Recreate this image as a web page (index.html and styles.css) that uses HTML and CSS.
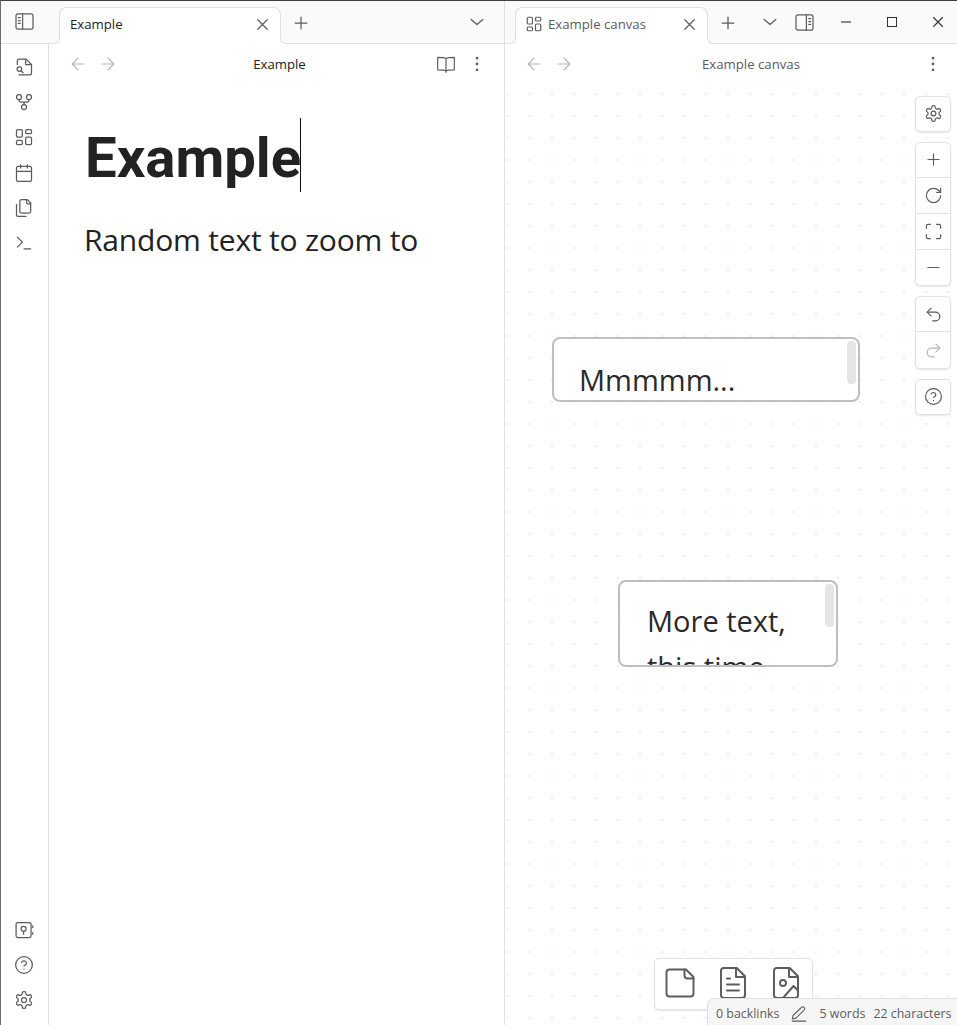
FILE: index.html
```html
<!DOCTYPE html>
<html lang="en">
<head>
<meta charset="utf-8">
<title>Example</title>
<link rel="stylesheet" href="styles.css">
</head>
<body>
<svg class="defs" width="0" height="0" aria-hidden="true">
  <symbol id="i-sidebar-l" viewBox="0 0 20 18"><rect x="1" y="1" width="18" height="16" rx="2"/><path d="M8 1v16M3.500 5h2M3.500 8h2M3.500 11h2"/></symbol>
  <symbol id="i-sidebar-r" viewBox="0 0 20 18"><rect x="1" y="1" width="18" height="16" rx="2"/><path d="M12 1v16M14.500 5h2M14.500 8h2M14.500 11h2"/></symbol>
  <symbol id="i-x" viewBox="0 0 24 24"><path d="M18 6 6 18M6 6l12 12"/></symbol>
  <symbol id="i-plus" viewBox="0 0 24 24"><path d="M12 5v14M5 12h14"/></symbol>
  <symbol id="i-chev" viewBox="0 0 24 24"><path d="m5 9 7 6 7-6"/></symbol>
  <symbol id="i-left" viewBox="0 0 24 24"><path d="M19 12H5M12 19l-7-7 7-7"/></symbol>
  <symbol id="i-right" viewBox="0 0 24 24"><path d="M5 12h14M12 5l7 7-7 7"/></symbol>
  <symbol id="i-book" viewBox="0 0 24 24"><path d="M12 5.500C10.500 4 8 4 2 4v15c6 0 8.500 0 10 1.500 1.500-1.500 4-1.500 10-1.500V4c-6 0-8.500 0-10 1.500ZM12 5.500V22"/></symbol>
  <symbol id="i-more" viewBox="0 0 24 24"><circle cx="12" cy="5" r="1"/><circle cx="12" cy="12" r="1"/><circle cx="12" cy="19" r="1"/></symbol>
  <symbol id="i-file-search" viewBox="0 0 24 24"><path d="M4 9V4.500A2 2 0 0 1 6 2.500h8.500L21 9v10.500a2 2 0 0 1-2 2H6"/><path d="M14 3v6h7"/><circle cx="6.500" cy="14.500" r="2.800"/><path d="m8.800 16.800 2.200 2.200"/></symbol>
  <symbol id="i-graph" viewBox="0 0 24 24"><circle cx="12" cy="18" r="3"/><circle cx="6" cy="6" r="3"/><circle cx="18" cy="6" r="3"/><path d="M18 9v1a2 2 0 0 1-2 2H8a2 2 0 0 1-2-2V9M12 12v3"/></symbol>
  <symbol id="i-canvas" viewBox="0 0 24 24"><rect x="3" y="3" width="7" height="9" rx="1.500"/><rect x="14" y="3" width="7" height="5" rx="1.500"/><rect x="14" y="12" width="7" height="9" rx="1.500"/><rect x="3" y="16" width="7" height="5" rx="1.500"/></symbol>
  <symbol id="i-cal" viewBox="0 0 24 24"><rect x="3" y="4" width="18" height="18" rx="2"/><path d="M16 2v4M8 2v4M3 10h18"/></symbol>
  <symbol id="i-files" viewBox="0 0 24 24"><path d="M20 7h-3a2 2 0 0 1-2-2V2"/><path d="M9 18a2 2 0 0 1-2-2V4a2 2 0 0 1 2-2h7l4 4v10a2 2 0 0 1-2 2Z"/><path d="M3 7.600v12.800A1.600 1.600 0 0 0 4.600 22h9.800"/></symbol>
  <symbol id="i-term" viewBox="0 0 24 24"><path d="m4 17 6-6-6-6M12 19h8"/></symbol>
  <symbol id="i-vault" viewBox="0 0 24 24"><rect x="2.500" y="3" width="18" height="18" rx="2"/><circle cx="11.500" cy="10.500" r="3"/><path d="M11.500 13.500V17M22.500 7v2M22.500 15v2"/></symbol>
  <symbol id="i-help" viewBox="0 0 24 24"><circle cx="12" cy="12" r="10"/><path d="M9.090 9a3 3 0 0 1 5.830 1c0 2-3 3-3 3M12 17h.01"/></symbol>
  <symbol id="i-gear" viewBox="0 0 24 24"><path d="M12.220 2h-.44a2 2 0 0 0-2 2v.18a2 2 0 0 1-1 1.730l-.43.25a2 2 0 0 1-2 0l-.15-.08a2 2 0 0 0-2.730.730l-.22.380a2 2 0 0 0 .73 2.730l.15.1a2 2 0 0 1 1 1.720v.51a2 2 0 0 1-1 1.740l-.15.09a2 2 0 0 0-.73 2.730l.22.380a2 2 0 0 0 2.730.730l.15-.08a2 2 0 0 1 2 0l.43.25a2 2 0 0 1 1 1.730V20a2 2 0 0 0 2 2h.44a2 2 0 0 0 2-2v-.18a2 2 0 0 1 1-1.730l.43-.25a2 2 0 0 1 2 0l.15.08a2 2 0 0 0 2.730-.73l.22-.39a2 2 0 0 0-.73-2.730l-.15-.08a2 2 0 0 1-1-1.740v-.5a2 2 0 0 1 1-1.740l.15-.09a2 2 0 0 0 .73-2.730l-.22-.38a2 2 0 0 0-2.730-.73l-.15.08a2 2 0 0 1-2 0l-.43-.25a2 2 0 0 1-1-1.730V4a2 2 0 0 0-2-2z"/><circle cx="12" cy="12" r="3"/></symbol>
  <symbol id="i-rotate" viewBox="0 0 24 24"><path d="M21 12a9 9 0 1 1-9-9c2.520 0 4.930 1 6.740 2.740L21 8"/><path d="M21 3v5h-5"/></symbol>
  <symbol id="i-fit" viewBox="0 0 24 24"><path d="M8 3H5a2 2 0 0 0-2 2v3M21 8V5a2 2 0 0 0-2-2h-3M3 16v3a2 2 0 0 0 2 2h3M16 21h3a2 2 0 0 0 2-2v-3"/></symbol>
  <symbol id="i-minus" viewBox="0 0 24 24"><path d="M5 12h14"/></symbol>
  <symbol id="i-undo" viewBox="0 0 24 24"><path d="M9 14 4 9l5-5"/><path d="M4 9h10.500a5.500 5.500 0 0 1 0 11H11"/></symbol>
  <symbol id="i-redo" viewBox="0 0 24 24"><path d="m15 14 5-5-5-5"/><path d="M20 9H9.500a5.500 5.500 0 0 0 0 11H13"/></symbol>
  <symbol id="i-note" viewBox="0 0 24 24"><path d="M16 3H5a2 2 0 0 0-2 2v14a2 2 0 0 0 2 2h14a2 2 0 0 0 2-2V8Z"/><path d="M15 3v4a2 2 0 0 0 2 2h4"/></symbol>
  <symbol id="i-file-text" viewBox="0 0 24 24"><path d="M14.500 2H6a2 2 0 0 0-2 2v16a2 2 0 0 0 2 2h12a2 2 0 0 0 2-2V7.500Z"/><path d="M14 2v6h6M16 13H8M16 17H8M10 9H8"/></symbol>
  <symbol id="i-file-image" viewBox="0 0 24 24"><path d="M14.500 2H6a2 2 0 0 0-2 2v16a2 2 0 0 0 2 2h12a2 2 0 0 0 2-2V7.500Z"/><path d="M14 2v6h6"/><circle cx="10" cy="12" r="2"/><path d="m20 17-3-3-7 8"/></symbol>
  <symbol id="i-pencil" viewBox="0 0 24 24"><path d="M3 18.500 4 14 15.500 3a2.500 2.500 0 0 1 3.500 3.500L8 17.500Z"/><path d="M3 21.500h18"/></symbol>
</svg>

<div class="window">
  <header class="titlebar">
    <div class="rail-head"><svg class="ico ico-panel"><use href="#i-sidebar-l"/></svg></div>
    <div class="strip strip-left">
      <div class="tab tab-left">
        <span class="tab-title">Example</span>
        <svg class="ico ico-close"><use href="#i-x"/></svg>
      </div>
      <svg class="ico ico-add"><use href="#i-plus"/></svg>
      <svg class="ico ico-chev chev-left"><use href="#i-chev"/></svg>
    </div>
    <div class="strip strip-right">
      <div class="tab tab-right">
        <svg class="ico ico-tabicon"><use href="#i-canvas"/></svg>
        <span class="tab-title tab-title-dim">Example canvas</span>
        <svg class="ico ico-close"><use href="#i-x"/></svg>
      </div>
      <svg class="ico ico-add"><use href="#i-plus"/></svg>
      <svg class="ico ico-chev chev-right"><use href="#i-chev"/></svg>
      <svg class="ico ico-panel panel-right"><use href="#i-sidebar-r"/></svg>
      <div class="winctl">
        <span class="wbtn"><span class="w-min"></span></span>
        <span class="wbtn"><span class="w-max"></span></span>
        <span class="wbtn"><svg class="ico w-close"><use href="#i-x"/></svg></span>
      </div>
    </div>
  </header>

  <div class="main">
    <nav class="ribbon">
      <div class="ribbon-group">
        <svg class="ico ico-rib"><use href="#i-file-search"/></svg>
        <svg class="ico ico-rib"><use href="#i-graph"/></svg>
        <svg class="ico ico-rib"><use href="#i-canvas"/></svg>
        <svg class="ico ico-rib"><use href="#i-cal"/></svg>
        <svg class="ico ico-rib"><use href="#i-files"/></svg>
        <svg class="ico ico-rib"><use href="#i-term"/></svg>
      </div>
      <div class="ribbon-group">
        <svg class="ico ico-rib"><use href="#i-vault"/></svg>
        <svg class="ico ico-rib"><use href="#i-help"/></svg>
        <svg class="ico ico-rib"><use href="#i-gear"/></svg>
      </div>
    </nav>

    <section class="pane pane-left">
      <div class="viewhead">
        <div class="nav">
          <svg class="ico ico-nav"><use href="#i-left"/></svg>
          <svg class="ico ico-nav"><use href="#i-right"/></svg>
        </div>
        <div class="viewtitle">Example</div>
        <div class="actions">
          <svg class="ico ico-act"><use href="#i-book"/></svg>
          <svg class="ico ico-act"><use href="#i-more"/></svg>
        </div>
      </div>
      <article class="doc">
        <h1 class="doc-title">Example<span class="caret"></span></h1>
        <p class="doc-text">Random text to zoom to</p>
      </article>
    </section>

    <section class="pane pane-right">
      <div class="viewhead viewhead-right">
        <div class="nav">
          <svg class="ico ico-nav"><use href="#i-left"/></svg>
          <svg class="ico ico-nav"><use href="#i-right"/></svg>
        </div>
        <div class="viewtitle viewtitle-dim">Example canvas</div>
        <div class="actions">
          <svg class="ico ico-act"><use href="#i-more"/></svg>
        </div>
      </div>
      <div class="canvas">
        <div class="node node-a">
          <div class="node-text">Mmmmm...</div>
          <span class="thumb thumb-a"></span>
        </div>
        <div class="node node-b">
          <div class="node-text">More text,<br>this time</div>
          <span class="thumb thumb-b"></span>
        </div>

        <div class="controls">
          <div class="ctl-group"><span class="ctl"><svg class="ico ico-ctl"><use href="#i-gear"/></svg></span></div>
          <div class="ctl-group">
            <span class="ctl"><svg class="ico ico-ctl"><use href="#i-plus"/></svg></span>
            <span class="ctl"><svg class="ico ico-ctl"><use href="#i-rotate"/></svg></span>
            <span class="ctl"><svg class="ico ico-ctl"><use href="#i-fit"/></svg></span>
            <span class="ctl"><svg class="ico ico-ctl"><use href="#i-minus"/></svg></span>
          </div>
          <div class="ctl-group">
            <span class="ctl"><svg class="ico ico-ctl"><use href="#i-undo"/></svg></span>
            <span class="ctl"><svg class="ico ico-ctl ico-off"><use href="#i-redo"/></svg></span>
          </div>
          <div class="ctl-group"><span class="ctl"><svg class="ico ico-ctl"><use href="#i-help"/></svg></span></div>
        </div>

        <div class="cardmenu">
          <svg class="ico ico-card"><use href="#i-note"/></svg>
          <svg class="ico ico-card"><use href="#i-file-text"/></svg>
          <svg class="ico ico-card"><use href="#i-file-image"/></svg>
        </div>
      </div>
    </section>
  </div>

  <footer class="status">
    <span>0 backlinks</span>
    <svg class="ico ico-pen"><use href="#i-pencil"/></svg>
    <span class="status-words">5 words</span>
    <span>22 characters</span>
  </footer>
</div>
</body>
</html>
```

FILE: styles.css
```css
* { box-sizing: border-box; }
html, body { margin: 0; height: 100%; background: #fff; overflow: hidden; }
body { font-family: "Open Sans", "Noto Sans", sans-serif; color: #222; }
.defs { position: absolute; }

.ico { display: block; fill: none; stroke: #5c5c5c; stroke-width: 1.75; stroke-linecap: round; stroke-linejoin: round; flex: none; overflow: visible; }

.window { position: relative; width: 957px; height: 1025px; border-top: 1px solid #3f3f3f; border-left: 1px solid #6e6e6e; display: flex; flex-direction: column; overflow: hidden; }

/* title bar */
.titlebar { display: flex; height: 43px; flex: none; background: #fafafa; }
.rail-head { width: 48px; flex: none; display: flex; align-items: center; justify-content: center; padding: 0 1px 1px 0; border-bottom: 1px solid #e0e0e0; }
.ico-panel { width: 19px; height: 17px; stroke-width: 1.3; }
.strip { display: flex; align-items: flex-end; height: 43px; border-bottom: 1px solid #e0e0e0; }
.strip-left { width: 456px; flex: none; padding-left: 10px; border-right: 1px solid #e0e0e0; }
.strip-right { flex: 1; min-width: 0; padding-left: 10px; }

.tab { position: relative; height: 37px; margin-bottom: -1px; background: #fff; border: 1px solid #e0e0e0; border-bottom: 0; border-radius: 8px 8px 0 0; display: flex; align-items: center; padding: 0 8px 4px 10px; flex: none; }
.tab::before, .tab::after { content: ""; position: absolute; bottom: 0; width: 6px; height: 6px; background: #fafafa; border: 0 solid #e0e0e0; border-bottom-width: 1px; }
.tab::before { left: -7px; border-right-width: 1px; border-bottom-right-radius: 6px; box-shadow: 3px 3px 0 #fff; }
.tab::after { right: -7px; border-left-width: 1px; border-bottom-left-radius: 6px; box-shadow: -3px 3px 0 #fff; }
.tab-left { width: 222px; }
.tab-right { width: 193px; padding-left: 9px; }
.tab-title { flex: 1; font-size: 13.200px; color: #222; white-space: nowrap; }
.tab-title-dim { color: #5c5c5c; }
.ico-close { width: 19px; height: 19px; stroke-width: 1.5; }
.ico-tabicon { width: 18px; height: 18px; margin-right: 5px; stroke-width: 1.6; }
.ico-add { width: 20px; height: 20px; margin: 0 0 10px 10px; stroke-width: 1.5; }
.ico-chev { width: 20px; height: 20px; stroke-width: 1.5; margin-bottom: 11px; }
.chev-left { margin-left: 156px; }
.chev-right { margin-left: 22px; }
.panel-right { margin: 0 0 12px 15px; stroke-width: 1.3; }
.winctl { display: flex; align-items: center; margin-left: 8.500px; height: 42px; padding-bottom: 1px; }
.wbtn { width: 46.300px; display: flex; justify-content: center; align-items: center; }
.w-min { width: 10px; height: 2px; background: #8a8a8a; }
.w-max { width: 10px; height: 10px; border: 1px solid #333; }
.w-close { width: 18px; height: 18px; stroke: #333; stroke-width: 1.5; }

/* body */
.main { flex: 1; display: flex; min-height: 0; }
.ribbon { width: 48px; flex: none; border-right: 1px solid #e0e0e0; display: flex; flex-direction: column; justify-content: space-between; align-items: center; padding: 13px 1px 15px 0; background: #fff; }
.ribbon-group { display: flex; flex-direction: column; gap: 15.200px; }
.ico-rib { width: 20px; height: 20px; stroke-width: 1.5; }

.pane { display: flex; flex-direction: column; min-width: 0; }
.pane-left { width: 456px; flex: none; border-right: 1px solid #e0e0e0; }
.pane-right { flex: 1; }

.viewhead { height: 40px; flex: none; display: grid; grid-template-columns: 1fr auto 1fr; align-items: center; padding: 0 17px 0 19px; }
.viewhead-right { padding-right: 14px; }
.nav { display: flex; gap: 10px; }
.ico-nav { width: 20px; height: 20px; stroke: #b5b5b5; stroke-width: 1.4; }
.viewtitle { font-size: 13.200px; color: #222; padding-left: 4px; }
.viewtitle-dim { color: #5c5c5c; padding-left: 35px; }
.actions { display: flex; justify-content: flex-end; gap: 11px; }
.ico-act { width: 20px; height: 20px; stroke-width: 1.4; }

/* document */
.doc { padding: 38px 36px 0 35px; }
.doc-title { position: relative; display: inline-block; margin: 0 0 0 1px; font-family: Roboto, "Open Sans", sans-serif; font-size: 56.300px; line-height: 72px; font-weight: 700; color: #222; }
.caret { position: absolute; right: 0; top: -4px; width: 1px; height: 74px; background: #111; }
.doc-text { margin: 24px 0 0; font-size: 30px; letter-spacing: -0.190px; line-height: 44px; color: #222; }

/* canvas */
.canvas { position: relative; flex: 1; background-color: #fff; background-image: radial-gradient(circle at 1px 1px, #ececec 0.8px, transparent 1px); background-size: 22px 22px; background-position: 2px 9px; }
.node { position: absolute; background: #fff; border: 2px solid #bfbfbf; border-radius: 8px; overflow: hidden; }
.node-a { left: 47px; top: 253px; width: 308px; height: 65px; }
.node-b { left: 113px; top: 496px; width: 220px; height: 87px; }
.node-text { font-size: 29px; line-height: 46px; color: #2a2a2a; white-space: nowrap; }
.node-a .node-text { padding: 18px 0 0 25px; }
.node-b .node-text { padding: 16px 0 0 27px; }
.thumb { position: absolute; top: 2px; width: 9px; height: 43px; border-radius: 4px; background: #e5e5e5; }
.thumb-a { right: 2px; }
.thumb-b { right: 2px; }

.controls { position: absolute; top: 11.500px; right: 6px; display: flex; flex-direction: column; gap: 10px; }
.ctl-group { width: 36px; background: #fff; border: 1px solid #e3e3e3; border-radius: 5px; box-shadow: 0 1px 2px rgba(0,0,0,.1); display: flex; flex-direction: column; }
.ctl { height: 36.300px; display: flex; align-items: center; justify-content: center; border-top: 1px solid #e3e3e3; }
.ctl:first-child { height: 34px; border-top: 0; }
.ico-ctl { width: 19px; height: 19px; stroke-width: 1.5; }
.ico-off { stroke: #b5b5b5; }

.cardmenu { position: absolute; left: 149px; top: 874px; width: 159px; height: 52px; background: #fff; border: 1px solid #e3e3e3; border-radius: 5px; box-shadow: 0 1px 2px rgba(0,0,0,.1); display: flex; gap: 17px; padding: 6px 7px 0; }
.ico-card { width: 36px; height: 36px; stroke-width: 1.3; }

/* status */
.status { position: absolute; right: 0; bottom: 0; height: 27px; width: 250px; background: #f6f6f6; border: 1px solid #e0e0e0; border-width: 1px 0 0 1px; border-top-left-radius: 8px; display: flex; align-items: center; padding: 3px 0 0 8px; font-size: 12.400px; color: #5c5c5c; white-space: nowrap; }
.ico-pen { width: 18px; height: 18px; margin: 0 11px; stroke-width: 1.4; }
.status-words { margin-right: 8px; }
```
